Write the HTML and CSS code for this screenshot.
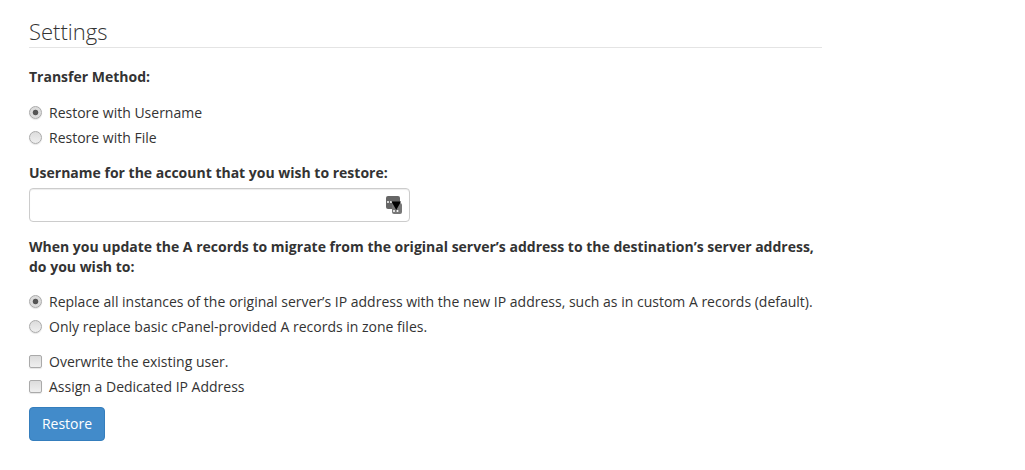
FILE: index.html
```html
<!DOCTYPE html>
<html lang="en">
<head>
    <meta charset="UTF-8">
    <title>Settings</title>
    <link rel="stylesheet" href="styles.css">
</head>
<body>
    <div class="container">
        <h2 class="section-title">Settings</h2>

        <!-- Transfer method -->
        <p class="field-label method-label">Transfer Method:</p>
        <div class="option-group method-options">
            <label class="option"><input type="radio" name="method" checked><span>Restore with Username</span></label>
            <label class="option"><input type="radio" name="method"><span>Restore with File</span></label>
        </div>

        <!-- Username -->
        <label class="field-label username-label" for="username">Username for the account that you wish to restore:</label>
        <div class="input-wrap">
            <input type="text" id="username" class="text-input">
            <svg class="input-icon" width="16" height="18" viewBox="0 0 16 18">
                <rect x="0" y="0" width="14" height="13" rx="2" fill="#666"/>
                <rect x="6" y="7" width="10" height="11" rx="2" fill="#777"/>
                <circle cx="2" cy="6" r="1" fill="#fff"/>
                <circle cx="5" cy="6" r="1" fill="#fff"/>
                <circle cx="8" cy="15" r="1" fill="#fff"/>
                <circle cx="11.5" cy="15" r="1" fill="#fff"/>
                <path d="M5.5 5.5h9.5l-4.75 8.5z" fill="#000"/>
            </svg>
        </div>

        <!-- A records -->
        <p class="field-label records-label">When you update the A records to migrate from the original server’s address to the destination’s server address, do you wish to:</p>
        <div class="option-group records-options">
            <label class="option"><input type="radio" name="records" checked><span>Replace all instances of the original server’s IP address with the new IP address, such as in custom A records (default).</span></label>
            <label class="option"><input type="radio" name="records"><span>Only replace basic cPanel-provided A records in zone files.</span></label>
        </div>

        <div class="option-group extra-options">
            <label class="option"><input type="checkbox"><span>Overwrite the existing user.</span></label>
            <label class="option"><input type="checkbox"><span>Assign a Dedicated IP Address</span></label>
        </div>

        <button type="button" class="button">Restore</button>
    </div>
</body>
</html>
```

FILE: styles.css
```css
body {
    font-family: 'Open Sans', sans-serif;
    font-size: 14px;
    line-height: 20px;
    margin: 0;
    padding: 0;
    background-color: #fff;
    color: #333;
}

.container {
    width: 793px;
    padding: 0 0 0 29px;
}

.section-title {
    font-size: 22px;
    font-weight: 300;
    line-height: 30px;
    margin: 0;
    padding: 16px 0 0;
    height: 31px;
    border-bottom: 1px solid #e4e4e4;
}

.field-label {
    display: block;
    font-weight: 700;
    margin: 0;
}

.method-label {
    margin-top: 19px;
}

.method-options {
    margin-top: 13px;
}

.username-label {
    margin-top: 13px;
}

.records-label {
    margin-top: 15px;
}

.records-options {
    margin-top: 12px;
}

.extra-options {
    margin-top: 10px;
}

/* Radios and checkboxes */
.option {
    display: flex;
    align-items: center;
    gap: 7px;
    height: 25px;
}

.option input {
    appearance: none;
    flex: none;
    width: 13px;
    height: 13px;
    margin: 0;
    background: linear-gradient(#dcdcdc, #efefef);
    border: 1px solid #aaa;
    box-shadow: 0 1px 1px rgba(0, 0, 0, 0.1);
}

.option input[type="radio"] {
    border-radius: 50%;
}

.option input[type="checkbox"] {
    border-radius: 2px;
}

.option input:checked {
    background: radial-gradient(circle, #555 0, #555 2.4px, #dcdcdc 3.2px);
}

/* Username input */
.input-wrap {
    position: relative;
    width: 381px;
    height: 34px;
    margin-top: 5px;
}

.text-input {
    display: block;
    box-sizing: border-box;
    width: 100%;
    height: 100%;
    border: 1px solid #ccc;
    border-radius: 4px;
    box-shadow: inset 0 1px 1px rgba(0, 0, 0, 0.075);
}

.input-icon {
    position: absolute;
    top: 8px;
    right: 8px;
}

/* Buttons */
.button {
    display: block;
    width: 76px;
    height: 34px;
    margin-top: 8px;
    padding: 0 0 2px;
    font-family: inherit;
    font-size: 14px;
    color: #fff;
    background-color: #428bca;
    border: 1px solid #357ebd;
    border-radius: 4px;
    cursor: pointer;
}
```
